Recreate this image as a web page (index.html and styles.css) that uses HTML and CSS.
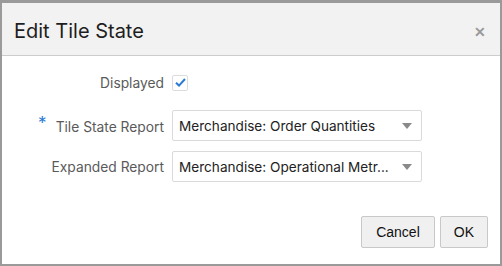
FILE: index.html
```html
<!DOCTYPE html>
<html lang="en">
<head>
    <meta charset="UTF-8">
    <title>Edit Tile State</title>
    <link rel="stylesheet" href="styles.css">
</head>
<body>
    <div class="dialog">
        <div class="dialog-header">
            <h2>Edit Tile State</h2>
            <span class="close">&#x2715;</span>
        </div>
        <div class="dialog-body">
            <div class="row">
                <label class="label">Displayed</label>
                <span class="check">
                    <svg width="13" height="13" viewBox="0 0 13 13"><path d="M2 6.8 L5 9.6 L11 3" fill="none" stroke="#2b7bd4" stroke-width="2"/></svg>
                </span>
            </div>
            <div class="row">
                <label class="label"><span class="req">*</span>Tile State Report</label>
                <div class="select"><span>Merchandise: Order Quantities</span><i class="arrow"></i></div>
            </div>
            <div class="row">
                <label class="label">Expanded Report</label>
                <div class="select"><span>Merchandise: Operational Metr...</span><i class="arrow"></i></div>
            </div>
        </div>
        <div class="dialog-footer">
            <button>Cancel</button>
            <button class="ok">OK</button>
        </div>
    </div>
</body>
</html>
```

FILE: styles.css
```css
html, body {
    margin: 0;
    padding: 0;
    background: #ffffff;
}
body {
    font-family: 'Liberation Sans', Arial, sans-serif;
}
.dialog {
    width: 502px;
    height: 266px;
    box-sizing: border-box;
    border: 2px solid #9a9a9a;
    border-top-width: 3px;
    background: #ffffff;
    display: flex;
    flex-direction: column;
}
.dialog-header {
    height: 52px;
    background: #f2f2f2;
    border-bottom: 1px solid #cccccc;
    display: flex;
    align-items: center;
    justify-content: space-between;
    padding: 0 14px 0 12px;
}
.dialog-header h2 {
    margin: 3px 0 0;
    font-family: 'Inter', sans-serif;
    font-weight: 400;
    font-size: 20px;
    color: #1e1e1e;
}
.close {
    color: #9a9a9a;
    font-size: 14px;
    font-weight: bold;
    margin-top: 5px;
}
.dialog-body {
    padding-top: 11px;
    display: flex;
    flex-direction: column;
    gap: 10px;
}
.row {
    display: grid;
    grid-template-columns: 162px auto;
    column-gap: 8px;
    align-items: center;
    height: 31px;
}
.row:first-child {
    margin-bottom: 2px;
}
.label {
    text-align: right;
    font-family: 'Inter', sans-serif;
    font-size: 13.8px;
    color: #5a5a5a;
}
.req {
    color: #2b7bd4;
    font-size: 17px;
    margin-right: 9px;
    position: relative;
    top: -3px;
}
.check {
    width: 14px;
    height: 14px;
    border: 1px solid #dcdcdc;
    border-radius: 2px;
    display: flex;
    align-items: center;
    justify-content: center;
}
.select {
    width: 250px;
    height: 31px;
    box-sizing: border-box;
    border: 1px solid #dadada;
    border-radius: 2px;
    display: flex;
    align-items: center;
    justify-content: space-between;
    padding: 0 9px 0 6px;
    font-family: 'Inter', sans-serif;
    font-size: 13.6px;
    color: #222222;
}
.arrow {
    width: 0;
    height: 0;
    border-left: 5px solid transparent;
    border-right: 5px solid transparent;
    border-top: 6px solid #8a8a8a;
}
.dialog-footer {
    margin-top: auto;
    display: flex;
    justify-content: flex-end;
    gap: 5px;
    padding: 0 12px 16px 0;
}
button {
    height: 32px;
    padding: 0 14px;
    background: #f0f0f0;
    border: 1px solid #c8c8c8;
    border-radius: 2px;
    font-family: 'Liberation Sans', Arial, sans-serif;
    font-size: 14px;
    color: #111111;
}
button.ok {
    padding: 0 13px;
}
```
